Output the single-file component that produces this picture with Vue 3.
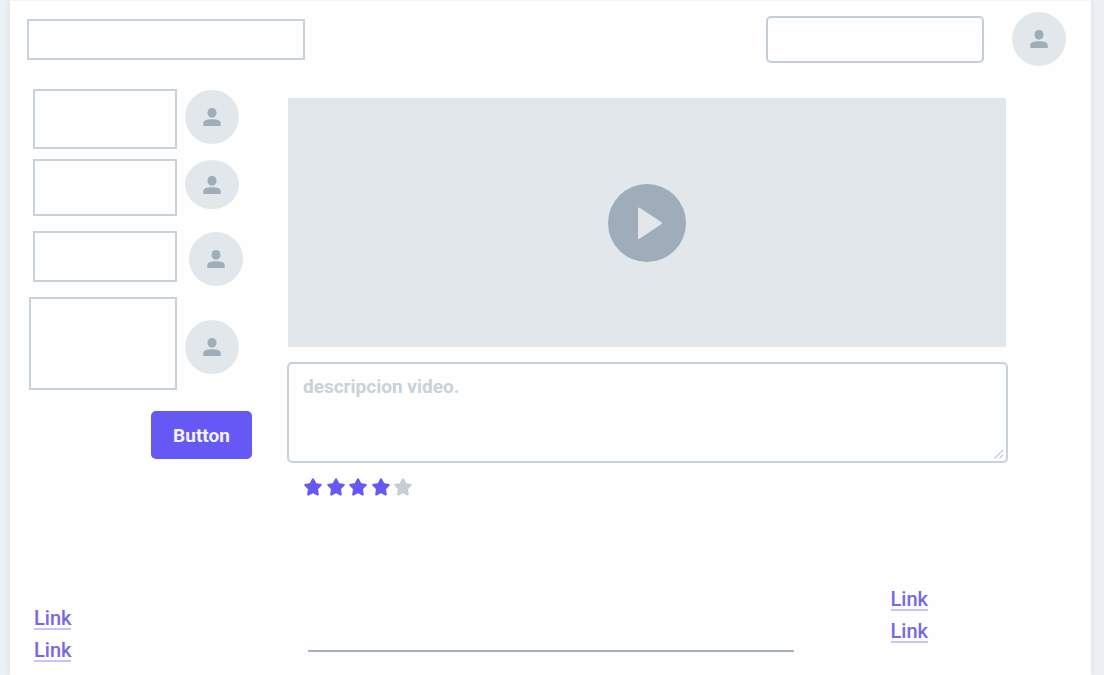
<script setup>
import { ref } from 'vue'

const people = [
  { id: 1, size: 'tall' },
  { id: 2, size: 'medium' },
  { id: 3, size: 'short' },
  { id: 4, size: 'large' }
]
const search = ref('')
const description = ref('')
const rating = 4
</script>

<template>
  <div class="sheet">
    <header class="header">
      <div class="title-box"></div>
      <input v-model="search" class="search" type="text" aria-label="Search" />
      <span class="avatar">
        <svg viewBox="0 0 18 18" aria-hidden="true">
          <ellipse cx="9" cy="4.800" rx="4.500" ry="5" />
          <path d="M.3 18v-2.800c0-2.900 3.700-3.900 8.700-3.900s8.700 1 8.700 3.900V18z" />
        </svg>
      </span>
    </header>

    <div class="body">
      <aside class="sidebar">
        <div v-for="p in people" :key="p.id" class="row" :class="p.size">
          <div class="card"></div>
          <span class="avatar">
            <svg viewBox="0 0 18 18" aria-hidden="true">
              <ellipse cx="9" cy="4.800" rx="4.500" ry="5" />
              <path d="M.3 18v-2.800c0-2.900 3.700-3.900 8.700-3.900s8.700 1 8.700 3.900V18z" />
            </svg>
          </span>
        </div>
        <button class="action" type="button">Button</button>
      </aside>

      <main class="content">
        <div class="video">
          <button class="play" type="button" aria-label="Play">
            <svg viewBox="0 0 78 78" aria-hidden="true">
              <path d="M31 24.500v29.500L53 39.200z" />
            </svg>
          </button>
        </div>
        <div class="field">
          <textarea v-model="description" placeholder="descripcion video." aria-label="descripcion video."></textarea>
          <svg class="grip" viewBox="0 0 10 10" aria-hidden="true">
            <path d="M.7 9.300 9.300.7M5.500 9.300 9.300 5.500" />
          </svg>
        </div>
        <div class="stars" role="img" aria-label="4 / 5">
          <svg v-for="n in 5" :key="n" :class="{ on: n <= rating }" viewBox="0 0 18 18">
            <path d="M9 1.200 11.500 6l5.300.9-3.800 3.900.8 5.800L9 14.200l-4.800 2.400.8-5.800L1.200 6.900 6.500 6z" />
          </svg>
        </div>
      </main>
    </div>

    <footer class="footer">
      <nav class="links start">
        <a href="#">Link</a>
        <a href="#">Link</a>
      </nav>
      <hr class="rule" />
      <nav class="links end">
        <a href="#">Link</a>
        <a href="#">Link</a>
      </nav>
    </footer>
  </div>
</template>

<style>
body {
  margin: 0;
  background: #edf1f5;
}
</style>

<style scoped>
.sheet {
  box-sizing: border-box;
  display: flex;
  flex-direction: column;
  min-height: 100vh;
  margin: 0 13px 0 10px;
  border-top: 1px solid #f4f5f7;
  background: #fefefe;
  box-shadow: 0 0 6px rgba(130, 150, 170, 0.22);
  font-family: Roboto, "Liberation Sans", sans-serif;
}
.header {
  display: flex;
  align-items: center;
  padding: 11px 25px 0 17px;
}
.title-box,
.card {
  box-sizing: border-box;
  border: 2px solid #c8d2da;
}
.title-box {
  width: 278px;
  height: 41px;
}
.search {
  box-sizing: border-box;
  width: 218px;
  height: 47px;
  margin: 0 28px 0 auto;
  padding: 0 14px;
  border: 2px solid #c5ced6;
  border-radius: 5px;
  outline: none;
  background: transparent;
  color: #5f6f7d;
  font: 500 20px Roboto, sans-serif;
}
.avatar {
  display: flex;
  flex: none;
  align-items: center;
  justify-content: center;
  width: 54px;
  height: 54px;
  border-radius: 50%;
  background: #e2e7eb;
}
.avatar svg {
  width: 18px;
  height: 18px;
  fill: #9eadb9;
}
.body {
  display: grid;
  grid-template-columns: 223px minmax(0, 1fr);
  column-gap: 35px;
  padding: 23px 83px 0 19px;
}
.sidebar {
  display: flex;
  flex-direction: column;
}
.row {
  display: flex;
  align-items: flex-start;
  gap: 8px;
  padding-left: 4px;
}
.card {
  width: 144px;
}
.row .avatar {
  margin-top: 1px;
}
.tall .card {
  height: 60px;
}
.medium {
  margin-top: 10px;
}
.medium .card {
  height: 57px;
}
.medium .avatar {
  height: 49px;
}
.short {
  gap: 12px;
  margin-top: 15px;
}
.short .card {
  height: 51px;
}
.large {
  margin-top: 11px;
  padding-left: 0;
}
.large .card {
  width: 148px;
  height: 93px;
}
.large .avatar {
  margin-top: 23px;
}
.action {
  align-self: flex-end;
  width: 101px;
  height: 48px;
  margin-top: 21px;
  padding: 0;
  border: 0;
  border-radius: 5px;
  background: #6558f5;
  color: #f5f4ff;
  font: 700 19px Roboto, sans-serif;
}
.content {
  padding-top: 9px;
}
.video {
  display: flex;
  align-items: center;
  justify-content: center;
  height: 249px;
  margin: 0 2px 0 1px;
  background: #e2e7eb;
}
.play {
  width: 78px;
  height: 78px;
  padding: 0;
  border: 0;
  border-radius: 50%;
  background: #9eadb9;
}
.play svg {
  display: block;
  fill: #e2e7eb;
  stroke: #e2e7eb;
  stroke-width: 2;
  stroke-linejoin: round;
}
.field {
  position: relative;
  margin-top: 15px;
}
textarea {
  box-sizing: border-box;
  display: block;
  width: 100%;
  height: 101px;
  padding: 11px 14px;
  border: 2px solid #c8d2da;
  border-radius: 5px;
  outline: none;
  resize: none;
  background: transparent;
  color: #5f6f7d;
  font: 700 19px/24px Roboto, sans-serif;
}
textarea::placeholder {
  color: #c8d2da;
  opacity: 1;
}
.grip {
  position: absolute;
  right: 4px;
  bottom: 4px;
  width: 10px;
  height: 10px;
  fill: none;
  stroke: #c3cdd6;
  stroke-width: 1.3;
}
.stars {
  display: flex;
  justify-content: space-between;
  width: 108px;
  margin: 15px 0 0 17px;
}
.stars svg {
  width: 18px;
  height: 18px;
  fill: #c5ced6;
  stroke: #c5ced6;
  stroke-width: 2;
  stroke-linejoin: round;
}
.stars .on {
  fill: #6558f5;
  stroke: #6558f5;
}
.footer {
  display: flex;
  align-items: flex-end;
  margin-top: auto;
  padding: 0 163px 13px 24px;
}
.links {
  display: flex;
  flex: none;
  flex-direction: column;
  align-items: flex-start;
  gap: 10px;
}
.links a {
  border-bottom: 2px solid #cbc2f8;
  color: #7668e2;
  font-size: 20px;
  font-weight: 500;
  line-height: 20px;
  text-decoration: none;
}
.start {
  width: 274px;
}
.end {
  margin: 0 0 19px 97px;
}
.rule {
  flex: 1;
  height: 2px;
  margin: 0 0 10px;
  border: 0;
  background: #a5b2bd;
}
</style>
